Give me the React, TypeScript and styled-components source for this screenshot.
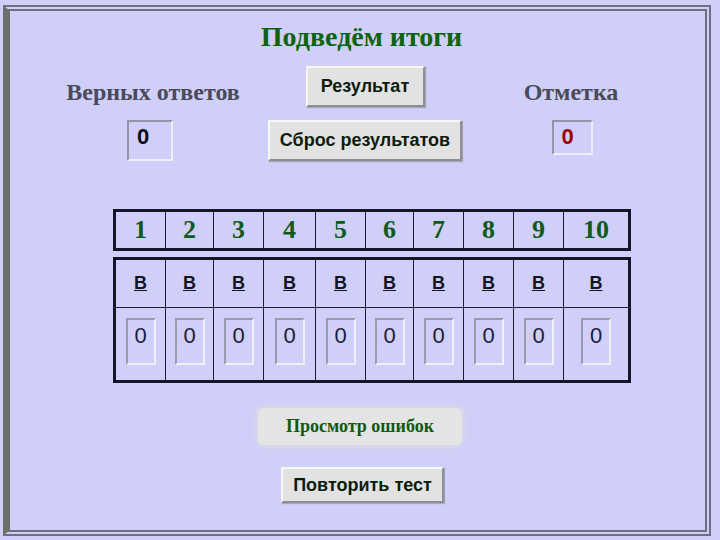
import React from "react";
import styled, { createGlobalStyle } from "styled-components";

const GlobalStyle = createGlobalStyle`
  html, body {
    margin: 0;
    padding: 0;
    background: #cfcff9;
  }
`;

const Frame = styled.div`
  box-sizing: border-box;
  margin: 5px 9px 0 3px;
  height: 531px;
  border-top: 6px double #6f6f82;
  border-right: 6px double #6f6f82;
  border-bottom: 6px double #6f6f82;
  border-left: 7px solid #6c7169;
  display: flex;
  flex-direction: column;
  align-items: stretch;
  font-family: "Liberation Sans", Arial, sans-serif;
`;

const Title = styled.h1`
  margin: 10px 0 0 8px;
  text-align: center;
  font-family: "Liberation Serif", "Times New Roman", serif;
  font-size: 28px;
  line-height: 32px;
  font-weight: bold;
  color: #0b630b;
`;

const TopGrid = styled.div`
  display: grid;
  grid-template-columns: 240px 230px 1fr;
  grid-template-rows: 41px 41px;
  row-gap: 13px;
  margin-top: 13px;
`;

const Side = styled.div<{ $left?: number; $right?: number }>`
  display: flex;
  justify-content: center;
  padding-left: ${(p) => p.$left ?? 0}px;
  padding-right: ${(p) => p.$right ?? 0}px;
`;

const Label = styled.div`
  align-self: flex-end;
  margin-bottom: 2px;
  font-family: "Liberation Serif", "Times New Roman", serif;
  font-size: 24px;
  line-height: 26px;
  font-weight: bold;
  color: #4a4a5a;
`;

const Middle = styled.div`
  display: flex;
  justify-content: center;
`;

const Button = styled.button<{ $min?: number; $h?: number }>`
  box-sizing: border-box;
  height: ${(p) => p.$h ?? 41}px;
  min-width: ${(p) => p.$min ?? 0}px;
  padding: 0 10px;
  background: #e2e2e2;
  border-top: 2px solid #f6f6f6;
  border-left: 2px solid #f6f6f6;
  border-right: 2px solid #8e8e96;
  border-bottom: 2px solid #8e8e96;
  box-shadow: 1px 1px 1px #a6a6b6;
  font-family: "Liberation Sans", Arial, sans-serif;
  font-size: 18px;
  font-weight: bold;
  color: #0c1c0c;
  cursor: pointer;
`;

const ScoreBox = styled.div<{ $w: number; $h: number; $color: string; $shift?: number }>`
  box-sizing: border-box;
  width: ${(p) => p.$w}px;
  height: ${(p) => p.$h}px;
  margin-left: ${(p) => p.$shift ?? 0}px;
  padding: 3px 0 0 8px;
  border-top: 2px solid #9494a8;
  border-left: 2px solid #9494a8;
  border-right: 2px solid #eeeef6;
  border-bottom: 2px solid #eeeef6;
  font-size: 22px;
  line-height: 24px;
  font-weight: bold;
  color: ${(p) => p.$color};
`;

const COLS = [49, 48, 50, 52, 50, 48, 50, 50, 50, 65];

const Table = styled.div<{ $mt: number }>`
  box-sizing: border-box;
  width: 518px;
  margin: ${(p) => p.$mt}px 0 0 103px;
  border: 3px solid #14142a;
  display: grid;
  grid-template-columns: ${COLS.map((c) => c + "px").join(" ")};
`;

const Cell = styled.div<{ $first?: boolean; $top?: boolean; $h: number }>`
  box-sizing: border-box;
  height: ${(p) => p.$h}px;
  border-left: ${(p) => (p.$first ? "none" : "1px solid #1c1c34")};
  border-top: ${(p) => (p.$top ? "1px solid #1c1c34" : "none")};
  display: flex;
  justify-content: center;
`;

const Num = styled.span`
  align-self: center;
  font-family: "Liberation Serif", "Times New Roman", serif;
  font-size: 26px;
  font-weight: bold;
  color: #0c5a1c;
`;

const Letter = styled.span`
  align-self: center;
  font-size: 18px;
  font-weight: bold;
  text-decoration: underline;
  color: #141420;
`;

const Answer = styled.div`
  box-sizing: border-box;
  width: 30px;
  height: 47px;
  margin-top: 10px;
  padding-top: 3px;
  border-top: 2px solid #9a9aae;
  border-left: 2px solid #9a9aae;
  border-right: 2px solid #f0f0f6;
  border-bottom: 2px solid #f0f0f6;
  text-align: center;
  font-size: 22px;
  line-height: 26px;
  color: #1c1c3c;
`;

const ReviewButton = styled.button`
  align-self: center;
  width: 204px;
  height: 37px;
  margin: 25px 0 0 5px;
  border: none;
  border-radius: 6px;
  background: #e4e4e4;
  box-shadow: 0 0 4px 2px #dadae6;
  font-family: "Liberation Serif", "Times New Roman", serif;
  font-size: 18px;
  font-weight: bold;
  color: #0e5a14;
`;

const Repeat = styled.div`
  align-self: center;
  margin: 22px 0 0 10px;
`;

const App: React.FC = () => {
  const nums = Array.from({ length: 10 }, (_, i) => i + 1);
  return (
    <>
      <GlobalStyle />
      <Frame>
        <Title>Подведём итоги</Title>
        <TopGrid>
          <Side $left={46}>
            <Label>Верных ответов</Label>
          </Side>
          <Middle>
            <Button $min={119}>Результат</Button>
          </Middle>
          <Side $right={43}>
            <Label>Отметка</Label>
          </Side>
          <Side $left={46}>
            <ScoreBox $w={46} $h={41} $color="#0c0c1c" $shift={-6}>
              0
            </ScoreBox>
          </Side>
          <Middle>
            <Button>Сброс результатов</Button>
          </Middle>
          <Side $right={43}>
            <ScoreBox $w={41} $h={35} $color="#a00008" $shift={2}>
              0
            </ScoreBox>
          </Side>
        </TopGrid>

        <Table $mt={48}>
          {nums.map((n, i) => (
            <Cell key={n} $first={i === 0} $h={36}>
              <Num>{n}</Num>
            </Cell>
          ))}
        </Table>

        <Table $mt={6}>
          {nums.map((n, i) => (
            <Cell key={"b" + n} $first={i === 0} $h={47}>
              <Letter>В</Letter>
            </Cell>
          ))}
          {nums.map((n, i) => (
            <Cell key={"a" + n} $first={i === 0} $top $h={73}>
              <Answer>0</Answer>
            </Cell>
          ))}
        </Table>

        <ReviewButton>Просмотр ошибок</ReviewButton>
        <Repeat>
          <Button $h={36}>Повторить тест</Button>
        </Repeat>
      </Frame>
    </>
  );
};

export default App;
